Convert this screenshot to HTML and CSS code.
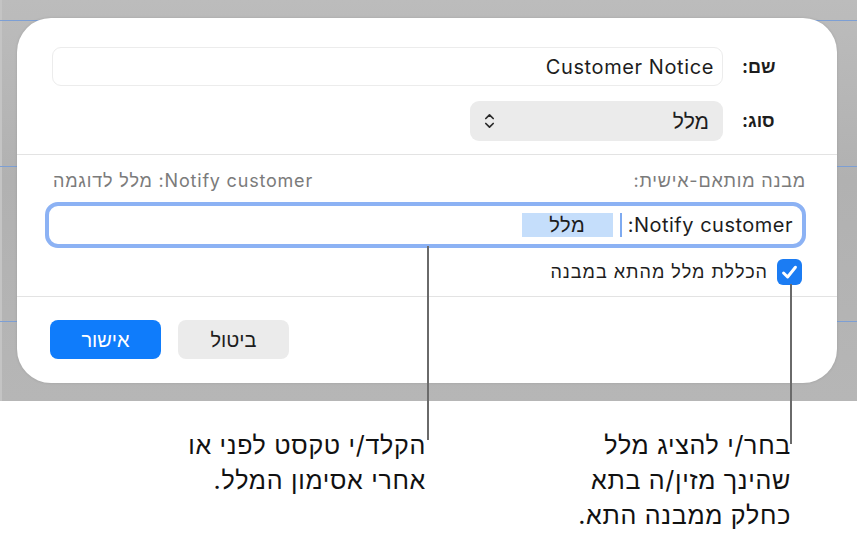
FILE: index.html
```html
<!DOCTYPE html>
<html lang="he">
<head>
    <meta charset="UTF-8">
    <meta name="viewport" content="width=device-width, initial-scale=1.0">
    <title>Custom Format</title>
    <link rel="stylesheet" href="styles.css">
</head>
<body>
    <div class="stage">
        <div class="backdrop">
            <div class="dialog" dir="rtl">
                <div class="section top">
                    <div class="row">
                        <span class="label">שם:</span>
                        <div class="field name-field">Customer Notice</div>
                    </div>
                    <div class="row">
                        <span class="label">סוג:</span>
                        <div class="select">
                            <span>מלל</span>
                            <svg class="chevrons" width="11" height="18" viewBox="0 0 11 18">
                                <path d="M1.8 6.5 L5.5 2.8 L9.2 6.5 M1.8 11.5 L5.5 15.2 L9.2 11.5" fill="none" stroke="#2a2a2a" stroke-width="1.7" stroke-linecap="round" stroke-linejoin="round"/>
                            </svg>
                        </div>
                    </div>
                </div>

                <div class="section format">
                    <div class="format-head">
                        <span>מבנה מותאם-אישית:</span>
                        <span>Notify customer: מלל לדוגמה</span>
                    </div>
                    <div class="format-field">
                        <span class="typed">Notify customer:</span>
                        <span class="caret"></span>
                        <span class="token">מלל</span>
                    </div>
                    <label class="check-row">
                        <span class="checkbox">
                            <svg width="19" height="19" viewBox="0 0 16 16">
                                <path d="M3 8.4 L6.4 11.8 L13 3.6" fill="none" stroke="#fff" stroke-width="2.5" stroke-linecap="round" stroke-linejoin="round"/>
                            </svg>
                        </span>
                        <span>הכללת מלל מהתא במבנה</span>
                    </label>
                </div>

                <div class="section actions">
                    <button class="btn">ביטול</button>
                    <button class="btn primary">אישור</button>
                </div>
            </div>
        </div>

        <div class="callouts" dir="rtl">
            <p class="note right-note">בחר/י להציג מלל<br>שהינך מזין/ה בתא<br>כחלק ממבנה התא.</p>
            <p class="note">הקלד/י טקסט לפני או<br>אחרי אסימון המלל.</p>
        </div>

        <div class="pointer pointer-field"></div>
        <div class="pointer pointer-check"></div>
    </div>
</body>
</html>
```

FILE: styles.css
```css
body {
    margin: 0;
    background-color: #ffffff;
    font-family: Inter, "Liberation Sans", sans-serif;
    color: #1d1d1d;
}

.stage {
    position: relative;
    width: 857px;
    height: 537px;
    overflow: hidden;
}

/* dimmed spreadsheet behind the sheet, with its faint grid lines */
.backdrop {
    height: 401px;
    padding: 18px 20px 0 17px;
    box-sizing: border-box;
    background-color: #b3b3b3;
    background-image:
        linear-gradient(#7d9fd4, #7d9fd4),
        linear-gradient(#7d9fd4, #7d9fd4),
        linear-gradient(#7d9fd4, #7d9fd4),
        linear-gradient(90deg, #c4c4c4 0, #c4c4c4 2px, transparent 2px),
        linear-gradient(180deg, #bcbcbc 0%, #b1b1b1 45%, #b6b6b6 100%);
    background-size: 100% 1px, 100% 1px, 100% 1px, 100% 100%, 100% 100%;
    background-position: 0 20px, 0 166px, 0 321px, 0 0, 0 0;
    background-repeat: no-repeat;
}

.dialog {
    background-color: #ffffff;
    border-radius: 34px;
    height: 365px;
    display: flex;
    flex-direction: column;
    box-shadow: 0 0 3px rgba(0, 0, 0, 0.12);
}

.section {
    border-bottom: 1px solid #e3e3e3;
}

.top {
    padding: 29px 60px 13px 35px;
    display: flex;
    flex-direction: column;
    gap: 15px;
}

.row {
    display: flex;
    align-items: center;
    gap: 19px;
}

.label {
    width: 35px;
    font-weight: 700;
    font-size: 18px;
    text-align: left;
}

.field {
    flex: 1;
    height: 39px;
    box-sizing: border-box;
    border: 1px solid #ececec;
    border-radius: 9px;
    padding: 0 8px;
    display: flex;
    align-items: center;
    font-size: 20px;
    letter-spacing: 0.6px;
    direction: ltr;
    justify-content: flex-end;
}

.select {
    width: 253px;
    height: 40px;
    box-sizing: border-box;
    background-color: #ebebeb;
    border-radius: 9px;
    display: flex;
    align-items: center;
    justify-content: space-between;
    padding: 0 14px 0 14px;
    font-size: 21px;
}

.format {
    padding: 15px 31px 11px 28px;
}

.format-head {
    display: flex;
    justify-content: space-between;
    font-size: 18px;
    letter-spacing: 0.8px;
    color: #7b7b7b;
    padding-left: 8px;
    line-height: 22px;
}

.format-field {
    margin-top: 10px;
    height: 46px;
    box-sizing: border-box;
    border: 4px solid #8cb2f4;
    border-radius: 13px;
    display: flex;
    align-items: center;
    padding: 0 9px;
    gap: 6px;
    font-size: 20px;
    letter-spacing: 0.5px;
}

.caret {
    width: 2px;
    height: 24px;
    background-color: #7eaaf0;
}

.token {
    background-color: #c5defb;
    width: 91px;
    height: 24px;
    margin-right: 1px;
    display: flex;
    align-items: center;
    justify-content: center;
    font-size: 20px;
}

.check-row {
    display: flex;
    align-items: center;
    gap: 9px;
    margin-top: 11px;
    padding-right: 4px;
    font-size: 18px;
    letter-spacing: 1px;
}

.checkbox {
    width: 25px;
    height: 26px;
    border-radius: 6px;
    background-color: #1b7cf3;
    display: flex;
    align-items: center;
    justify-content: center;
}

.actions {
    border-bottom: 0;
    display: flex;
    align-items: center;
    gap: 17px;
    padding: 23px 0 0 33px;
    direction: ltr;
    flex-direction: row-reverse;
    justify-content: flex-end;
}

.btn {
    width: 111px;
    height: 39px;
    border: none;
    border-radius: 8px;
    background-color: #ebebeb;
    font-family: Inter, "Liberation Sans", sans-serif;
    font-size: 20px;
    color: #1d1d1d;
}

.btn.primary {
    background-color: #0f7cfb;
    color: #ffffff;
}

.callouts {
    display: flex;
    padding: 27px 66px 0 0;
}

.note {
    margin: 0;
    font-size: 25px;
    letter-spacing: 0.7px;
    line-height: 35px;
    color: #111111;
}

.right-note {
    width: 365px;
}

.pointer {
    position: absolute;
    width: 2px;
    background-color: #6a6a6a;
}

.pointer-field {
    left: 427px;
    top: 246px;
    height: 194px;
}

.pointer-check {
    left: 790px;
    top: 284px;
    height: 160px;
}
```
